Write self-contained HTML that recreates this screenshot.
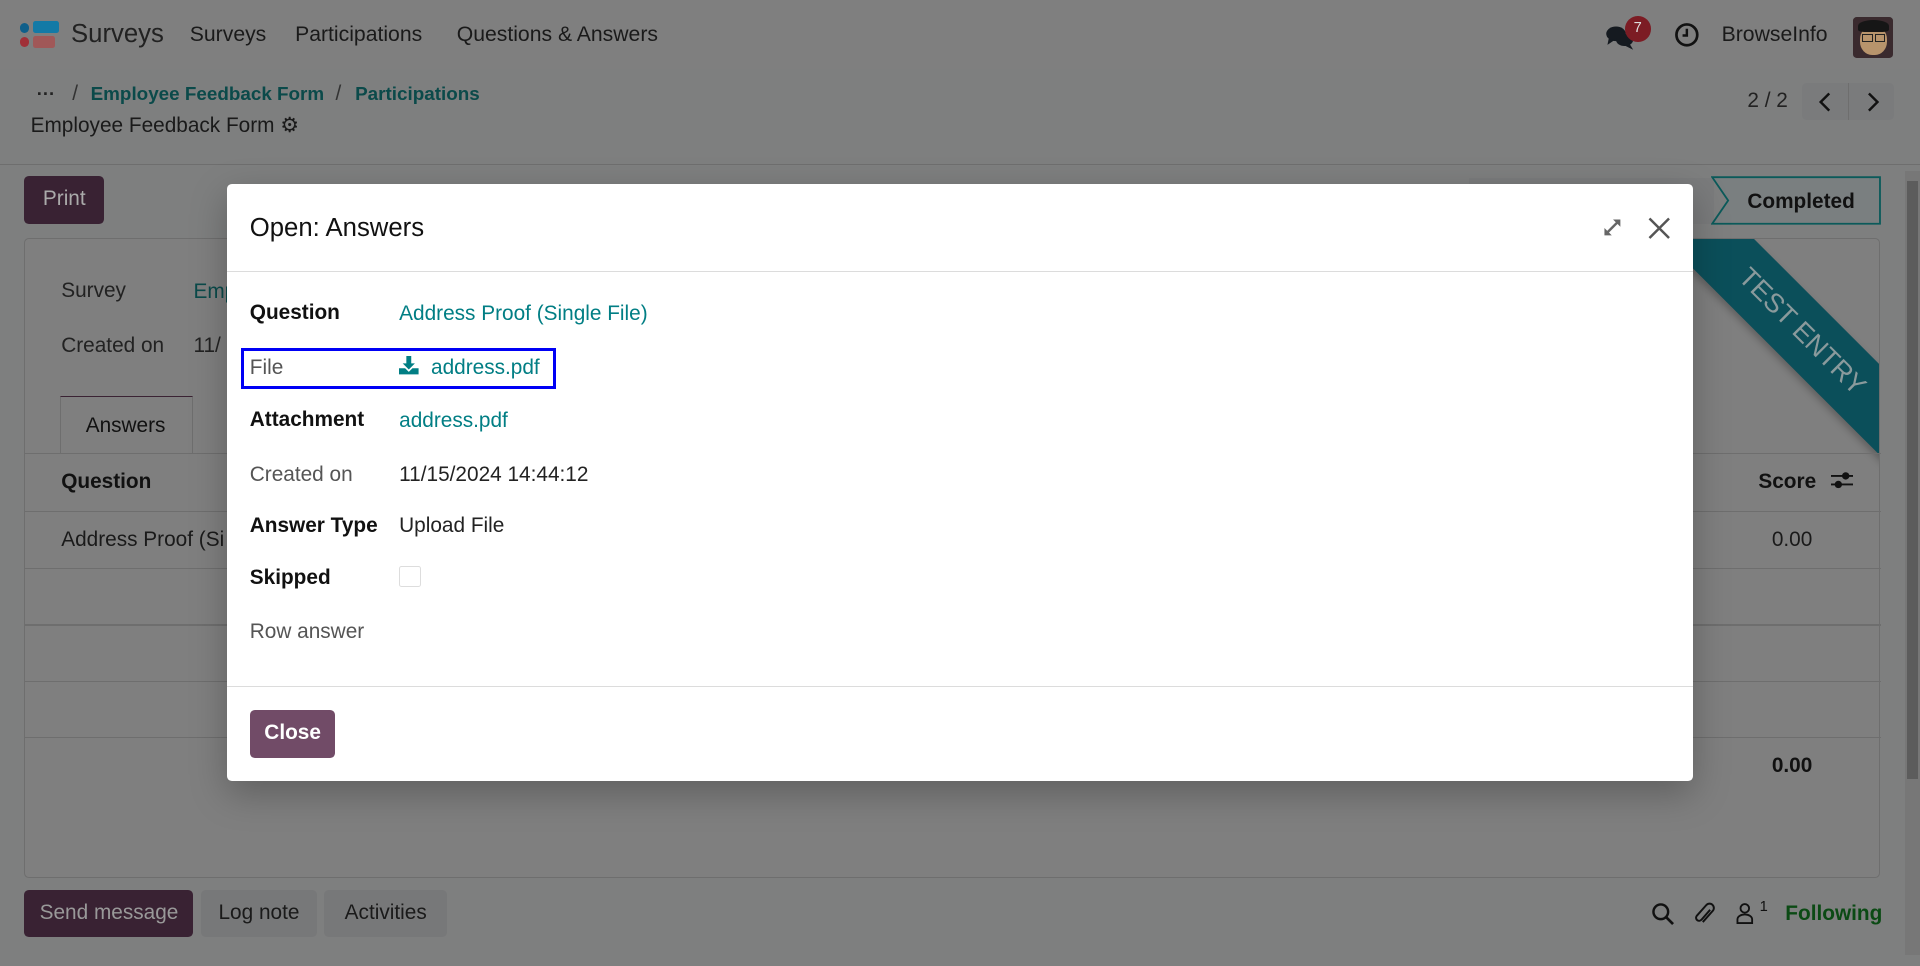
<!DOCTYPE html>
<html><head><meta charset="utf-8"><style>
html,body{margin:0;padding:0;width:1920px;height:966px;overflow:hidden;background:#7f7f7f}
#w{zoom:1.2244898;width:1568px;height:789px;position:relative;font-family:"Liberation Sans",sans-serif;font-size:17px;color:#111;background:#7e7f7f}
.a{position:absolute;white-space:nowrap;line-height:20px}
.tl{color:#0b4a4a}
.hl{position:absolute;height:1px;background:#6e6e6e}
.btn{position:absolute;border-radius:4px;line-height:38px;text-align:center}
</style></head><body><div id="w">
<!-- navbar -->
<div style="position:absolute;left:0;top:0;width:1568px;height:56px;background:#7f7f7f"></div>
<div style="position:absolute;left:16px;top:19px;width:8px;height:8px;border-radius:50%;background:#0f5f8a"></div>
<div style="position:absolute;left:27px;top:17px;width:21px;height:10px;border-radius:2px;background:#137aa6"></div>
<div style="position:absolute;left:16px;top:30px;width:8px;height:8px;border-radius:50%;background:#a03038"></div>
<div style="position:absolute;left:27px;top:29px;width:18px;height:10px;border-radius:2px;background:#a05858"></div>
<div class="a" style="left:58px;top:18px;font-size:21px;color:#222">Surveys</div>
<div class="a" style="left:155px;top:19px;font-size:17.3px;color:#1a1a1a">Surveys</div>
<div class="a" style="left:241px;top:19px;font-size:17.3px;color:#1a1a1a">Participations</div>
<div class="a" style="left:373px;top:19px;font-size:17.3px;color:#1a1a1a">Questions &amp; Answers</div>
<svg style="position:absolute;left:1311px;top:20px" width="26" height="22" viewBox="0 0 26 22"><ellipse cx="9" cy="8" rx="8" ry="6" fill="#151a20"/><path d="M3 12 L2 17 L8 13Z" fill="#151a20"/><ellipse cx="16" cy="13" rx="7" ry="5" fill="#151a20"/><path d="M20 16 L23 21 L15 17Z" fill="#151a20"/></svg>
<div style="position:absolute;left:1327px;top:13px;width:21px;height:21px;border-radius:50%;background:#7c1c24;color:#ddd;font-size:12px;text-align:center;line-height:20px">7</div>
<svg style="position:absolute;left:1367px;top:18px" width="21" height="21" viewBox="0 0 21 21"><circle cx="10.5" cy="10.5" r="8.5" fill="none" stroke="#111" stroke-width="2.2"/><path d="M10.5 5.5V11H7" fill="none" stroke="#111" stroke-width="2"/></svg>
<div class="a" style="left:1406px;top:19px;font-size:17.3px;color:#1a1a1a">BrowseInfo</div>
<div style="position:absolute;left:1513px;top:14px;width:33px;height:33px;border-radius:3px;background:#3a2a2e;overflow:hidden"><div style="position:absolute;left:6px;top:7px;width:22px;height:24px;border-radius:45%;background:#b8946c"></div><div style="position:absolute;left:4px;top:2px;width:26px;height:10px;border-radius:50% 50% 20% 20%;background:#161616"></div><div style="position:absolute;left:8px;top:14px;width:7px;height:5px;border:1.5px solid #222"></div><div style="position:absolute;left:18px;top:14px;width:7px;height:5px;border:1.5px solid #222"></div></div>
<!-- breadcrumb -->
<div class="a" style="left:30px;top:67px;font-weight:bold;color:#222;font-size:15px">···</div>
<div class="a" style="left:59px;top:67px;color:#333">/</div>
<div class="a tl" style="left:74px;top:67px;font-weight:bold;font-size:15.4px">Employee Feedback Form</div>
<div class="a" style="left:274px;top:67px;color:#333">/</div>
<div class="a tl" style="left:290px;top:67px;font-weight:bold;font-size:15.4px">Participations</div>
<div class="a" style="left:25px;top:93px;color:#1a1a1a">Employee Feedback Form <span style="font-size:17px">⚙</span></div>
<div class="a" style="left:1427px;top:73px;color:#222">2 / 2</div>
<div style="position:absolute;left:1472px;top:68px;width:75px;height:30px;border-radius:4px;background:#7a7b7c"></div>
<div style="position:absolute;left:1509px;top:68px;width:1px;height:30px;background:#6e6e6e"></div>
<svg style="position:absolute;left:1484px;top:74px" width="14" height="18"><path d="M10 2L3 9l7 7" fill="none" stroke="#111" stroke-width="2"/></svg>
<svg style="position:absolute;left:1522px;top:74px" width="14" height="18"><path d="M4 2l7 7-7 7" fill="none" stroke="#111" stroke-width="2"/></svg>
<div class="hl" style="left:0;top:134px;width:1568px"></div>
<!-- control row -->
<div class="btn" style="left:20px;top:144px;width:65px;height:39px;background:#392233;color:#aaa;font-size:17px">Print</div>
<div style="position:absolute;left:1200px;top:145px;width:200px;height:38px;background:#7a7b7c"></div>
<svg style="position:absolute;left:1397px;top:144px" width="139" height="40"><path d="M1 1H138V39H1L14 20Z" fill="#7a7f80" stroke="#0b5a5a" stroke-width="1.5"/></svg>
<div class="a" style="left:1427px;top:155px;font-weight:bold;color:#111;font-size:17px">Completed</div>
<!-- sheet -->
<div style="position:absolute;left:20px;top:194px;width:1514px;height:521px;border:1px solid #6e6e6e;border-radius:4px;background:#7f7f7f;overflow:hidden">
 <div style="position:absolute;left:1251px;top:50px;width:400px;height:52px;background:#0b4f5a;transform:rotate(45deg);color:#8a9a9c;font-size:22px;line-height:52px;text-align:center;box-shadow:0 3px 6px rgba(0,0,0,.25)">TEST ENTRY</div>
</div>
<div class="a" style="left:50px;top:228px;color:#222">Survey</div>
<div class="a tl" style="left:158px;top:229px">Emp</div>
<div class="a" style="left:50px;top:273px;color:#222">Created on</div>
<div class="a" style="left:158px;top:273px;color:#222">11/</div>
<div style="position:absolute;left:49px;top:323px;width:107px;height:47px;border:1px solid #6e6e6e;border-bottom:none;border-top-color:#3a2233;background:#7f7f7f"></div>
<div class="a" style="left:70px;top:338px;color:#111">Answers</div>
<div class="hl" style="left:20px;top:370px;width:1516px"></div>
<div class="a" style="left:50px;top:384px;font-weight:bold;color:#111">Question</div>
<div class="a" style="left:1436px;top:384px;font-weight:bold;color:#111">Score</div>
<svg style="position:absolute;left:1495px;top:385px" width="18" height="16"><path d="M0 4H18M0 11H18" stroke="#111" stroke-width="1.5"/><circle cx="12" cy="4" r="3" fill="#111"/><circle cx="6" cy="11" r="3" fill="#111"/></svg>
<div class="hl" style="left:20px;top:417px;width:1516px"></div>
<div class="a" style="left:50px;top:431px;color:#1a1a1a">Address Proof (Si</div>
<div class="a" style="left:1447px;top:431px;color:#1a1a1a">0.00</div>
<div class="hl" style="left:20px;top:464px;width:1516px"></div>
<div class="hl" style="left:20px;top:510px;width:1516px"></div>
<div class="hl" style="left:20px;top:556px;width:1516px"></div>
<div class="hl" style="left:20px;top:602px;width:1516px"></div>
<div class="a" style="left:1447px;top:616px;font-weight:bold;color:#111">0.00</div>
<!-- scrollbar -->
<div style="position:absolute;left:1556px;top:140px;width:12px;height:640px;background:#777"></div>
<div style="position:absolute;left:1557px;top:148px;width:9px;height:488px;background:#5c5c5c"></div>
<!-- chatter -->
<div class="btn" style="left:20px;top:727px;width:138px;height:38px;background:#392233;color:#999;font-size:17px">Send message</div>
<div class="btn" style="left:164px;top:727px;width:95px;height:38px;background:#777879;color:#1a1a1a;font-size:17px">Log note</div>
<div class="btn" style="left:265px;top:727px;width:100px;height:38px;background:#777879;color:#1a1a1a;font-size:17px">Activities</div>
<svg style="position:absolute;left:1348px;top:737px" width="20" height="20"><circle cx="8" cy="8" r="6" fill="none" stroke="#111" stroke-width="2"/><path d="M12.5 12.5L18 18" stroke="#111" stroke-width="2.2"/></svg>
<svg style="position:absolute;left:1383px;top:735px" width="20" height="22"><path d="M14 8L7 16a2.5 2.5 0 0 1-4-3l8-9a3.5 3.5 0 0 1 5 5l-8 9" fill="none" stroke="#111" stroke-width="1.6"/></svg>
<svg style="position:absolute;left:1417px;top:736px" width="16" height="20"><circle cx="8" cy="6" r="3.5" fill="none" stroke="#111" stroke-width="1.5"/><path d="M2 18v-3a6 4 0 0 1 12 0v3Z" fill="none" stroke="#111" stroke-width="1.5"/></svg>
<div class="a" style="left:1437px;top:731px;font-size:12px;color:#111">1</div>
<div class="a" style="left:1458px;top:737px;font-weight:bold;color:#0b4a14;font-size:17px">Following</div>
<!-- modal -->
<div style="position:absolute;left:185px;top:150px;width:1198px;height:488px;background:#fff;border-radius:4px;box-shadow:0 10px 30px rgba(0,0,0,.25)">
 <div class="a" style="left:19px;top:26px;font-size:21px;color:#111">Open: Answers</div>
 <svg style="position:absolute;left:1123px;top:27px" width="17" height="17" viewBox="0 0 17 17"><path d="M3 14L14 3" stroke="#666" stroke-width="2"/><path d="M9 2H15V8Z" fill="#666"/><path d="M2 9V15H8Z" fill="#666"/></svg>
 <svg style="position:absolute;left:1160px;top:26px" width="20" height="20"><path d="M2 2L18 18M18 2L2 18" stroke="#555" stroke-width="2"/></svg>
 <div style="position:absolute;left:0;top:71px;width:1198px;height:1px;background:#dcdcdc"></div>
 <div class="a" style="left:19px;top:96px;font-weight:bold">Question</div>
 <div class="a" style="left:141px;top:97px;color:#017e84">Address Proof (Single File)</div>
 <div style="position:absolute;left:12px;top:134px;width:252px;height:29px;border:3px solid #0000f5"></div>
 <div class="a" style="left:19px;top:141px;color:#555">File</div>
 <svg style="position:absolute;left:141px;top:141px" width="17" height="16" viewBox="0 0 17 16"><path d="M6 0H10V6H13L8 11L3 6H6Z" fill="#017e84"/><path d="M0 10H5L8 13L11 10H16V15H0Z" fill="#017e84"/></svg>
 <div class="a" style="left:167px;top:141px;color:#017e84">address.pdf</div>
 <div class="a" style="left:19px;top:183px;font-weight:bold">Attachment</div>
 <div class="a" style="left:141px;top:184px;color:#017e84">address.pdf</div>
 <div class="a" style="left:19px;top:228px;color:#555">Created on</div>
 <div class="a" style="left:141px;top:228px;color:#222">11/15/2024 14:44:12</div>
 <div class="a" style="left:19px;top:270px;font-weight:bold">Answer Type</div>
 <div class="a" style="left:141px;top:270px;color:#222">Upload File</div>
 <div class="a" style="left:19px;top:312px;font-weight:bold">Skipped</div>
 <div style="position:absolute;left:141px;top:312px;width:16px;height:16px;border:1px solid #ddd;border-radius:2px"></div>
 <div class="a" style="left:19px;top:356px;color:#555">Row answer</div>
 <div style="position:absolute;left:0;top:410px;width:1198px;height:1px;background:#dcdcdc"></div>
 <div class="btn" style="left:19px;top:430px;width:70px;height:39px;background:#714b67;color:#fff;font-weight:bold;font-size:17px">Close</div>
</div>
</div></body></html>
